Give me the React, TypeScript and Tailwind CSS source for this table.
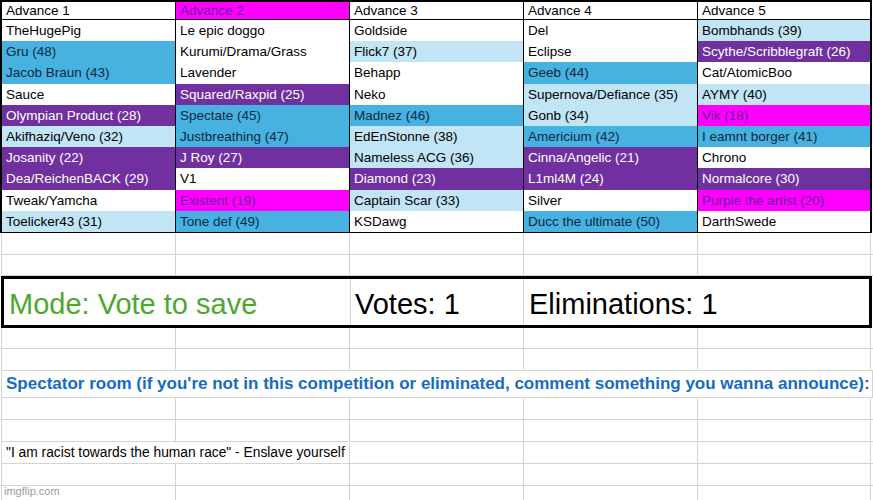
import React from "react";

type Tone = "white" | "blue" | "light" | "purple" | "magenta";

const toneClass: Record<Tone, string> = {
  white: "bg-white text-black",
  blue: "bg-[#47b2e0] text-[#0e2841]",
  light: "bg-[#c1e5f5] text-black",
  purple: "bg-[#7030a0] text-white",
  magenta: "bg-[#ff00ff] text-[#6a1f9c]",
};

const headers: { label: string; tone: Tone }[] = [
  { label: "Advance 1", tone: "white" },
  { label: "Advance 2", tone: "magenta" },
  { label: "Advance 3", tone: "white" },
  { label: "Advance 4", tone: "white" },
  { label: "Advance 5", tone: "white" },
];

const columns: [string, Tone][][] = [
  [
    ["TheHugePig", "white"],
    ["Gru (48)", "blue"],
    ["Jacob Braun (43)", "blue"],
    ["Sauce", "white"],
    ["Olympian Product (28)", "purple"],
    ["Akifhaziq/Veno (32)", "light"],
    ["Josanity (22)", "purple"],
    ["Dea/ReichenBACK (29)", "purple"],
    ["Tweak/Yamcha", "white"],
    ["Toelicker43 (31)", "light"],
  ],
  [
    ["Le epic doggo", "white"],
    ["Kurumi/Drama/Grass", "white"],
    ["Lavender", "white"],
    ["Squared/Raxpid (25)", "purple"],
    ["Spectate (45)", "blue"],
    ["Justbreathing (47)", "blue"],
    ["J Roy (27)", "purple"],
    ["V1", "white"],
    ["Existent (19)", "magenta"],
    ["Tone def (49)", "blue"],
  ],
  [
    ["Goldside", "white"],
    ["Flick7 (37)", "light"],
    ["Behapp", "white"],
    ["Neko", "white"],
    ["Madnez (46)", "blue"],
    ["EdEnStonne (38)", "light"],
    ["Nameless ACG (36)", "light"],
    ["Diamond (23)", "purple"],
    ["Captain Scar (33)", "light"],
    ["KSDawg", "white"],
  ],
  [
    ["Del", "white"],
    ["Eclipse", "white"],
    ["Geeb (44)", "blue"],
    ["Supernova/Defiance (35)", "light"],
    ["Gonb (34)", "light"],
    ["Americium (42)", "blue"],
    ["Cinna/Angelic (21)", "purple"],
    ["L1ml4M (24)", "purple"],
    ["Silver", "white"],
    ["Ducc the ultimate (50)", "blue"],
  ],
  [
    ["Bombhands (39)", "light"],
    ["Scythe/Scribblegraft (26)", "purple"],
    ["Cat/AtomicBoo", "white"],
    ["AYMY (40)", "light"],
    ["Vik (18)", "magenta"],
    ["I eamnt borger (41)", "blue"],
    ["Chrono", "white"],
    ["Normalcore (30)", "purple"],
    ["Purple the artist (20)", "magenta"],
    ["DarthSwede", "white"],
  ],
];

const widths = ["w-[174px]", "w-[174px]", "w-[174px]", "w-[174px]", "w-[173px]"];

const EmptyRow = ({ h }: { h: string }) => (
  <div className={`flex ${h} border-b border-[#d4d4d4]`}>
    {widths.map((w, i) => (
      <div key={i} className={`${w} shrink-0 border-r border-[#d4d4d4]`} />
    ))}
  </div>
);

export default function App() {
  return (
    <div className="relative w-[873px] h-[500px] overflow-hidden bg-white font-['Liberation_Sans',Arial,sans-serif]">
      {/* standings table */}
      <div className="flex w-[872px] border-2 border-b border-black">
        {columns.map((col, ci) => (
          <div
            key={ci}
            className={`flex flex-col ${ci === 4 ? "w-[172px]" : "w-[174px] border-r border-black"}`}
          >
            <div
              className={`h-[18px] border-b border-black pl-[4px] text-[13.5px] leading-[18px] ${toneClass[headers[ci].tone]}`}
            >
              {headers[ci].label}
            </div>
            <div className="grid grid-rows-10 h-[212px]">
              {col.map(([name, tone], ri) => (
                <div
                  key={ri}
                  className={`pl-[4px] text-[13.5px] leading-[21px] whitespace-nowrap overflow-hidden ${toneClass[tone]}`}
                >
                  {name}
                </div>
              ))}
            </div>
          </div>
        ))}
      </div>

      {/* sheet below */}
      <div className="flex flex-col border-l border-[#d4d4d4] ml-px">
        <EmptyRow h="h-[22px]" />
        <EmptyRow h="h-[21px]" />

        <div className="flex h-[52px] -ml-px w-[871px] border-[3px] border-black text-[29px] leading-none">
          <div className="w-[346px] shrink-0 flex items-end pl-[5px] pb-[6px] text-[#4ea72e]">
            Mode: Vote to save
          </div>
          <div className="w-[174px] shrink-0 flex items-end pl-[4px] pb-[6px] border-x border-[#d4d4d4] text-black">
            Votes: 1
          </div>
          <div className="flex-1 flex items-end pl-[5px] pb-[6px] text-black">
            Eliminations: 1
          </div>
        </div>

        <EmptyRow h="h-[21px]" />
        <EmptyRow h="h-[22px]" />

        <div className="flex h-[27px] w-[871px] items-center border-b border-r border-[#d4d4d4]">
          <span className="pl-[4px] text-[17px] font-bold text-[#156cc1] whitespace-nowrap">
            Spectator room (if you're not in this competition or eliminated, comment something you wanna announce):
          </span>
        </div>

        <EmptyRow h="h-[22px]" />
        <EmptyRow h="h-[22px]" />

        <div className="flex h-[22px] border-b border-[#d4d4d4]">
          <div className="w-[348px] shrink-0 border-r border-[#d4d4d4] pl-[4px] text-[13.8px] leading-[22px] whitespace-nowrap text-black">
            "I am racist towards the human race" - Enslave yourself
          </div>
          {widths.slice(2).map((w, i) => (
            <div key={i} className={`${w} shrink-0 border-r border-[#d4d4d4]`} />
          ))}
        </div>

        <EmptyRow h="h-[22px]" />
        <EmptyRow h="h-[22px]" />
      </div>

      <div className="absolute left-[4px] bottom-[3px] text-[11px] leading-none text-[#9b9b9b]">
        imgflip.com
      </div>
    </div>
  );
}
